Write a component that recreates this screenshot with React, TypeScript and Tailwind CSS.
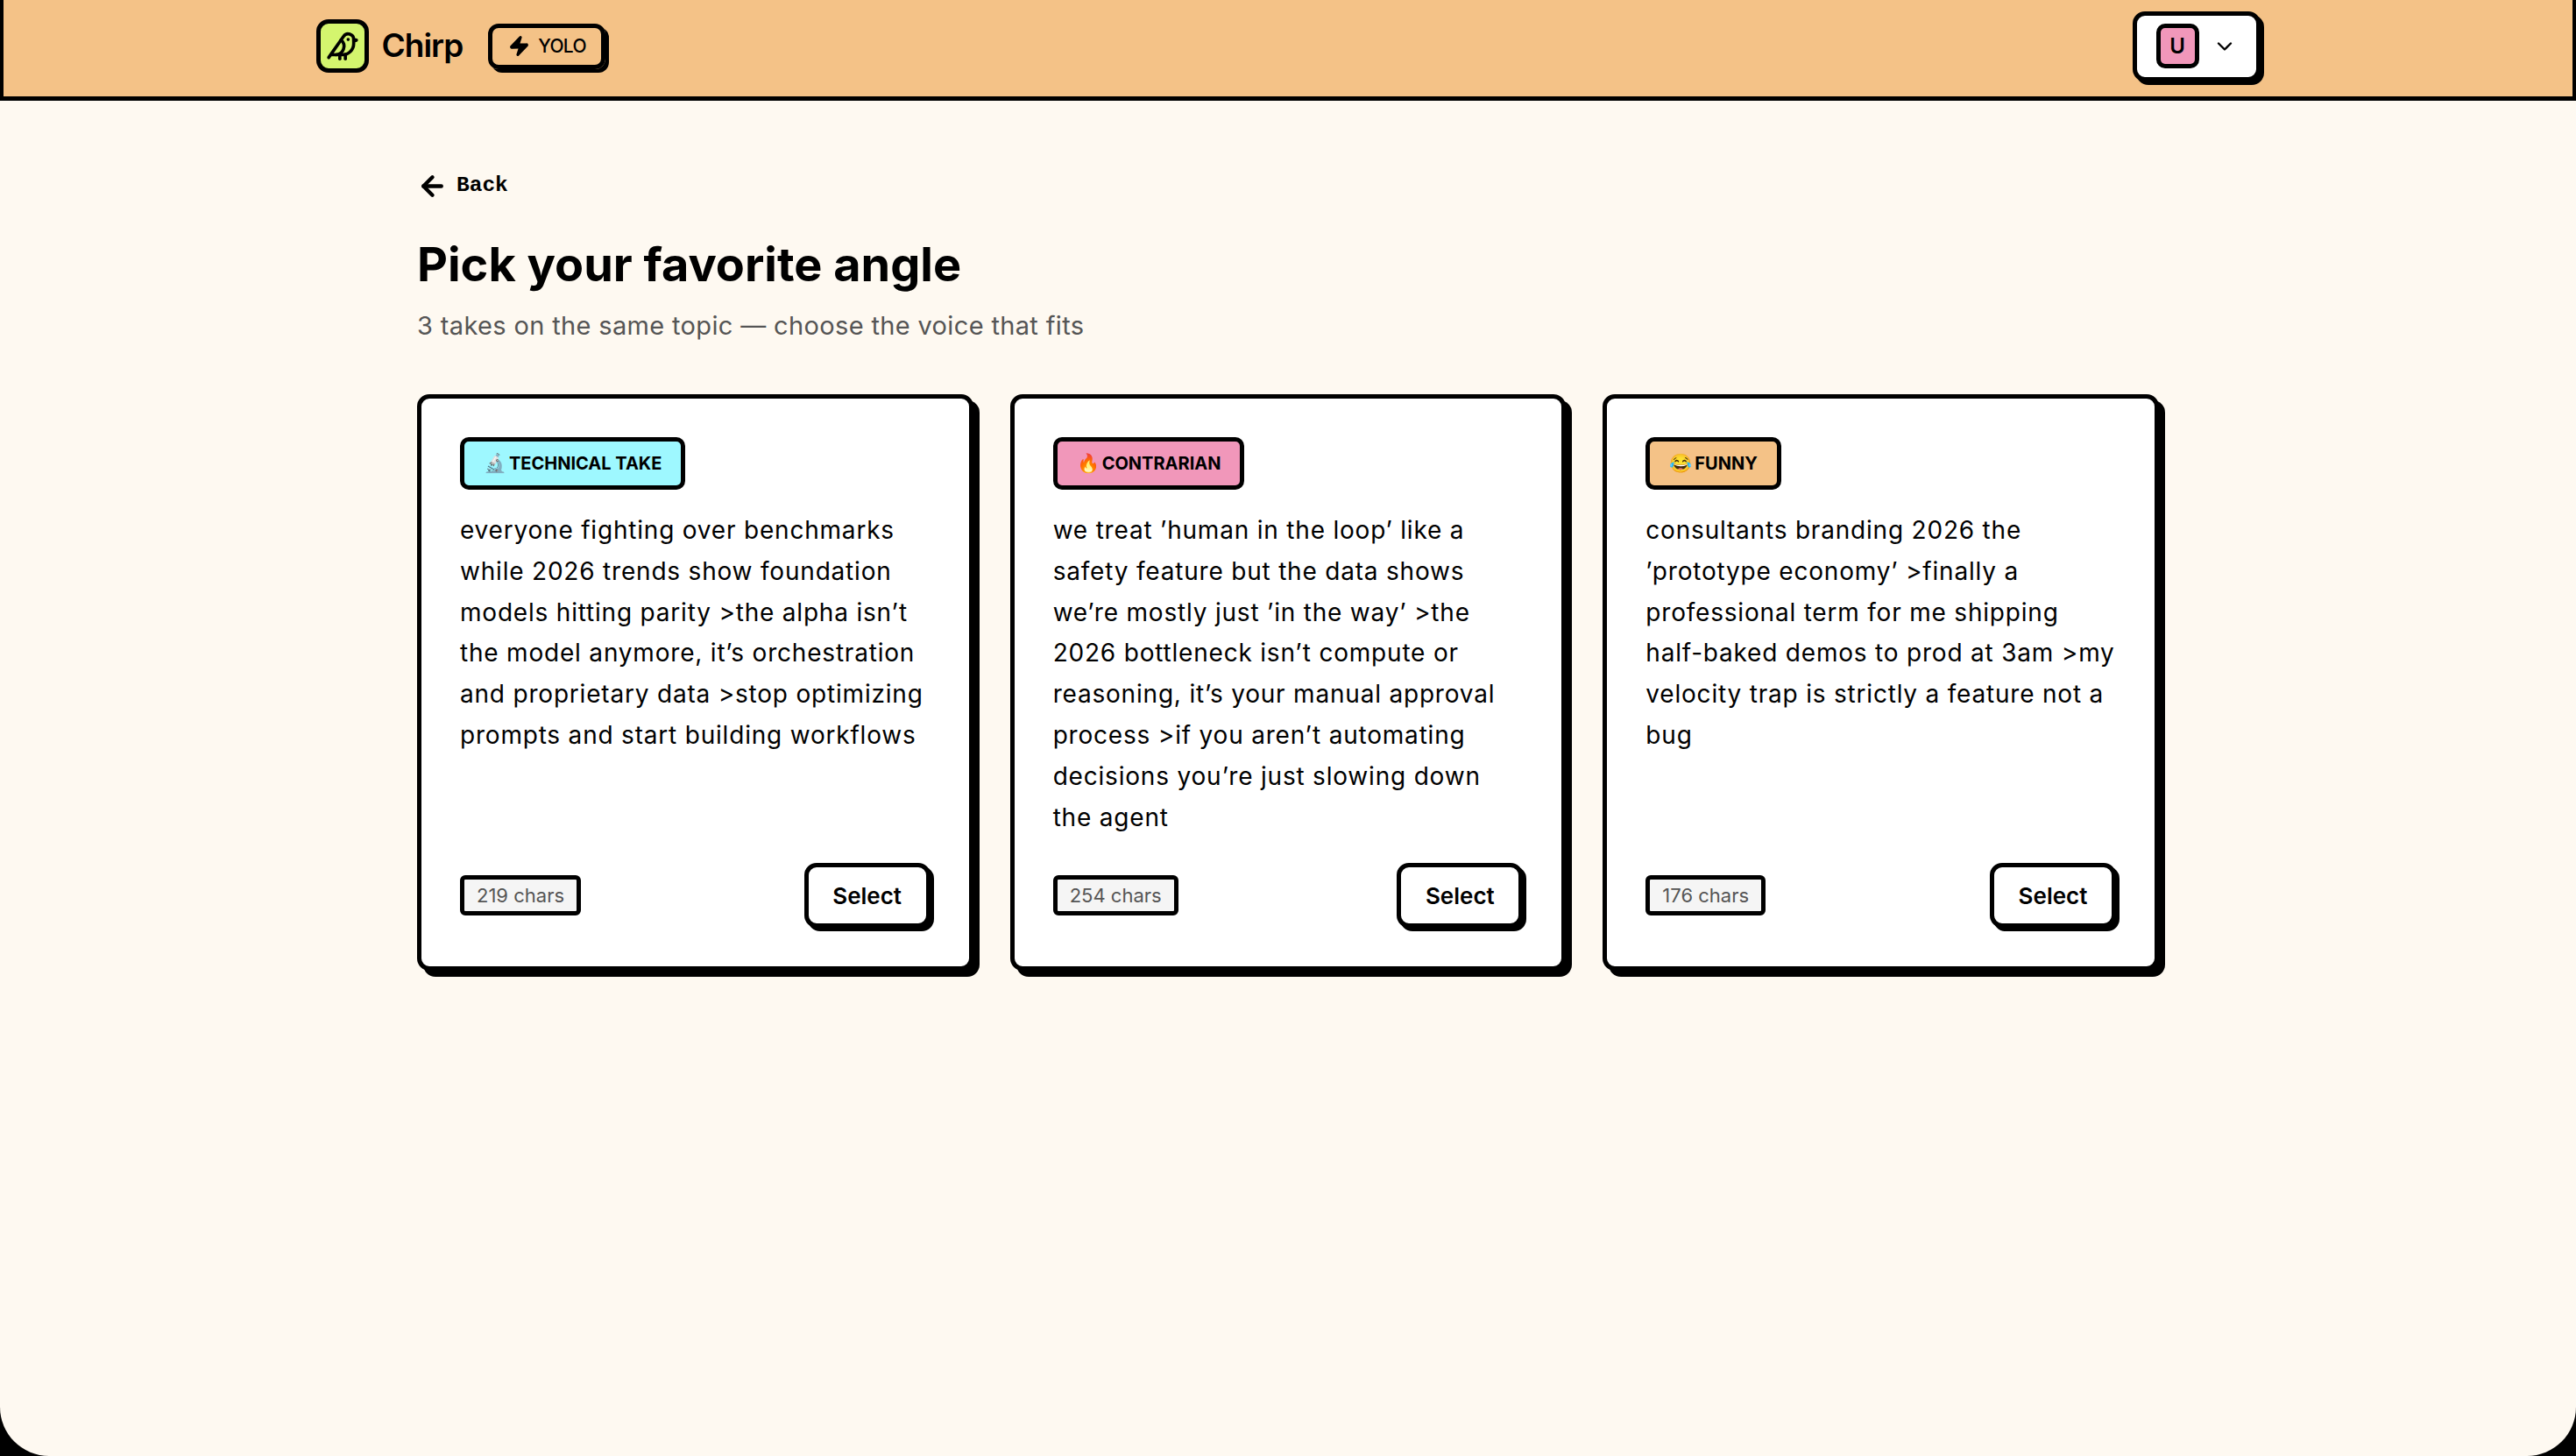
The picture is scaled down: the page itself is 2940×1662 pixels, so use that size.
import { ArrowLeft, Bird, ChevronDown, Zap } from 'lucide-react';

const takes = [
  {
    emoji: '🔬',
    label: 'TECHNICAL TAKE',
    badgeColor: 'bg-[#9ef8ff]',
    text: 'everyone fighting over benchmarks while 2026 trends show foundation models hitting parity >the alpha isn’t the model anymore, it’s orchestration and proprietary data >stop optimizing prompts and start building workflows',
    chars: 219,
  },
  {
    emoji: '🔥',
    label: 'CONTRARIAN',
    badgeColor: 'bg-[#f197ba]',
    text: 'we treat ’human in the loop’ like a safety feature but the data shows we’re mostly just ’in the way’ >the 2026 bottleneck isn’t compute or reasoning, it’s your manual approval process >if you aren’t automating decisions you’re just slowing down the agent',
    chars: 254,
  },
  {
    emoji: '😂',
    label: 'FUNNY',
    badgeColor: 'bg-[#f4c287]',
    text: 'consultants branding 2026 the ’prototype economy’ >finally a professional term for me shipping half-baked demos to prod at 3am >my velocity trap is strictly a feature not a bug',
    chars: 176,
  },
];

export default function App() {
  return (
    <div className="h-screen bg-black font-['Inter',sans-serif] text-black">
      <div className="flex h-full flex-col overflow-hidden rounded-b-[56px] bg-[#fef9f1]">
        {/* Header */}
        <header className="h-[115px] shrink-0 border-x-[4px] border-b-[5px] border-black bg-[#f4c287]">
          <div className="mx-auto flex h-full w-[2219px] items-center justify-between pb-[5px]">
            <div className="flex items-center">
              <div className="flex h-[61px] w-[60px] items-center justify-center rounded-[14px] border-[5px] border-black bg-[#d4f56e]">
                <Bird size={38} strokeWidth={2.3} />
              </div>
              <span className="mb-[2px] ml-[15px] text-[37px] font-semibold tracking-[-1px]">Chirp</span>
              <button className="ml-[29px] flex h-[52px] w-[134px] items-center rounded-[12px] border-[5px] border-black pl-[18px] shadow-[4px_4px_0_#000]">
                <Zap size={25} fill="currentColor" />
                <span className="ml-[9px] text-[21px] font-medium tracking-[-0.7px]">YOLO</span>
              </button>
            </div>
            <button className="flex h-[80px] w-[146px] items-center rounded-[14px] border-[5px] border-black bg-white pl-[22px] shadow-[4px_4px_0_#000]">
              <span className="flex h-[51px] w-[49px] items-center justify-center rounded-[10px] border-[5px] border-black bg-[#f197ba] text-[24px] font-semibold">
                U
              </span>
              <ChevronDown size={28} className="ml-[15px]" />
            </button>
          </div>
        </header>

        {/* Main */}
        <main className="mx-auto w-[1988px] pt-[81px]">
          <button className="flex h-[32px] items-center">
            <ArrowLeft size={35} strokeWidth={3} />
            <span className="ml-[10px] font-['Liberation_Mono',monospace] text-[24.5px] font-bold">Back</span>
          </button>
          <h1 className="mt-[40px] text-[54px] leading-[68px] font-bold">Pick your favorite angle</h1>
          <p className="mt-[16px] text-[29px] leading-[40px] tracking-[0.35px] text-[#555555]">
            3 takes on the same topic — choose the voice that fits
          </p>

          <div className="mt-[58px] grid grid-cols-3 gap-[42px]">
            {takes.map(take => (
              <div
                key={take.label}
                className="flex flex-col rounded-[14px] border-[5px] border-black bg-white p-[44px] shadow-[7px_7px_0_#000]"
              >
                <div className="self-start">
                  <span
                    className={`flex h-[60px] items-center rounded-[10px] border-[5px] border-black px-[22px] text-[20px] font-bold ${take.badgeColor}`}
                  >
                    <span className="mr-[3px] text-[21px]">{take.emoji}</span>
                    {take.label}
                  </span>
                </div>
                <p className="mt-[23px] flex-1 text-[28px] leading-[46.8px] tracking-[0.8px]">{take.text}</p>
                <div className="mt-[29px] flex items-center justify-between">
                  <span className="flex h-[46px] items-center rounded-[6px] border-[5px] border-black bg-[#f5f5f5] px-[14px] text-[22px] text-[#555555]">
                    {take.chars} chars
                  </span>
                  <button className="h-[74px] w-[144px] rounded-[14px] border-[5px] border-black bg-white text-[26px] font-semibold shadow-[4px_4px_0_#000]">
                    Select
                  </button>
                </div>
              </div>
            ))}
          </div>
        </main>
      </div>
    </div>
  );
}
